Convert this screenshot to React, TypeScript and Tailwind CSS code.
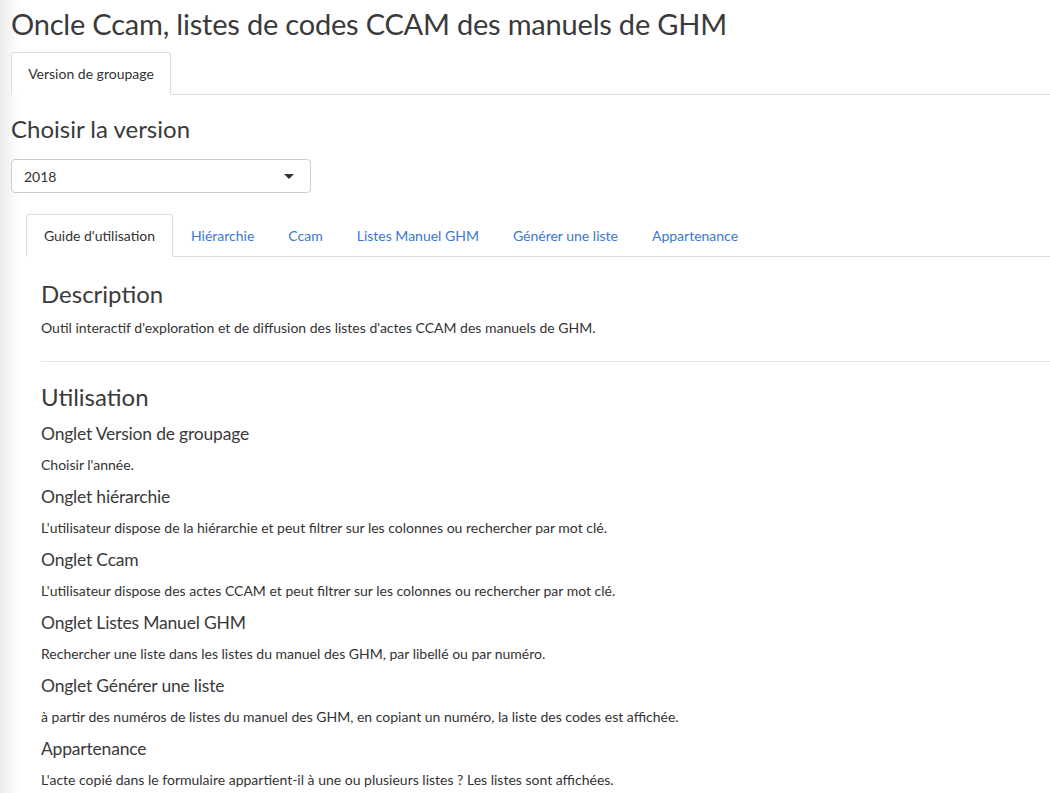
const innerTabs = ['Hiérarchie', 'Ccam', 'Listes Manuel GHM', 'Générer une liste', 'Appartenance']

const sections = [
  { title: 'Onglet Version de groupage', text: "Choisir l'année." },
  {
    title: 'Onglet hiérarchie',
    text: "L'utilisateur dispose de la hiérarchie et peut filtrer sur les colonnes ou rechercher par mot clé.",
  },
  {
    title: 'Onglet Ccam',
    text: "L'utilisateur dispose des actes CCAM et peut filtrer sur les colonnes ou rechercher par mot clé.",
  },
  {
    title: 'Onglet Listes Manuel GHM',
    text: 'Rechercher une liste dans les listes du manuel des GHM, par libellé ou par numéro.',
  },
  {
    title: 'Onglet Générer une liste',
    text: 'à partir des numéros de listes du manuel des GHM, en copiant un numéro, la liste des codes est affichée.',
  },
  {
    title: 'Appartenance',
    text: "L'acte copié dans le formulaire appartient-il à une ou plusieurs listes ? Les listes sont affichées.",
  },
]

export default function App() {
  return (
    <div className="relative min-h-[793px] overflow-hidden bg-white font-['Lato','Liberation_Sans',sans-serif] text-[#333]">
      <div className="pointer-events-none absolute inset-y-0 left-0 w-5 bg-gradient-to-r from-[#ececec] to-white" />

      <div className="relative pl-[11px]">
        <h1 className="pt-[5px] text-[29px] font-normal leading-[38px] tracking-[-0.2px] text-[#3a3a3a]">
          Oncle Ccam, listes de codes CCAM des manuels de GHM
        </h1>

        <div className="mt-[9px] flex border-b border-[#ddd]">
          <div className="-mb-px flex h-[43px] w-[160px] items-center justify-center rounded-t-[3px] border border-b-white border-[#ddd] bg-white text-[14px]">
            Version de groupage
          </div>
        </div>

        <h2 className="mt-[19px] text-[24px] font-normal leading-[30px] text-[#3a3a3a]">Choisir la version</h2>

        <div className="mt-[15px] flex h-[34px] w-[300px] items-center justify-between rounded-[4px] border border-[#ccc] bg-white pl-3 pr-4 text-[14px]">
          <span>2018</span>
          <span className="h-0 w-0 border-x-[5px] border-t-[5px] border-x-transparent border-t-[#333]" />
        </div>

        <div className="pl-[15px]">
          <div className="mt-[21px] flex border-b border-[#ddd]">
            <div className="-mb-px flex h-[43px] w-[147px] items-center justify-center rounded-t-[3px] border border-b-white border-[#ddd] bg-white text-[14px]">
              Guide d'utilisation
            </div>
            <div className="flex items-center gap-[34px] pl-[18px] text-[14px] text-[#3b78d0]">
              {innerTabs.map((t) => (
                <span key={t}>{t}</span>
              ))}
            </div>
          </div>

          <div className="pl-[15px]">
            <h3 className="mt-[22px] text-[24px] font-normal leading-[30px] text-[#3a3a3a]">Description</h3>
            <p className="mt-[9px] text-[14px] leading-[20px]">
              Outil interactif d'exploration et de diffusion des listes d'actes CCAM des manuels de GHM.
            </p>
            <hr className="mt-[23px] border-[#e5e5e5]" />
            <h3 className="mt-[20px] text-[24px] font-normal leading-[30px] text-[#3a3a3a]">Utilisation</h3>
            {sections.map((s, i) => (
              <div key={s.title}>
                <h4
                  className={
                    (i === 0 ? 'mt-[10px] ' : 'mt-[10px] ') +
                    'text-[17.5px] font-normal leading-[24px] tracking-[-0.2px] text-[#3a3a3a]'
                  }
                >
                  {s.title}
                </h4>
                <p className="mt-[9px] text-[14px] leading-[20px]">{s.text}</p>
              </div>
            ))}
          </div>
        </div>
      </div>
    </div>
  )
}
